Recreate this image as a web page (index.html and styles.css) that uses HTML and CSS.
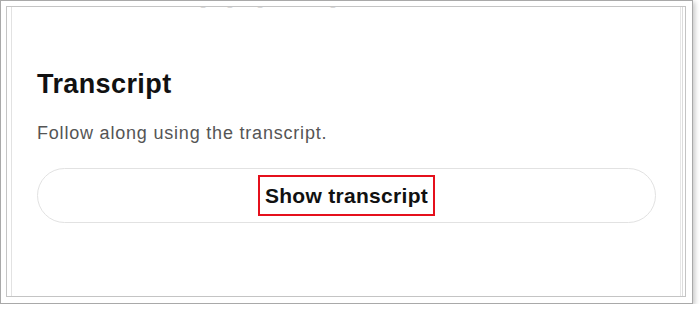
FILE: index.html
```html
<!DOCTYPE html>
<html lang="en">
<head>
    <meta charset="UTF-8">
    <meta name="viewport" content="width=device-width, initial-scale=1.0">
    <title>Transcript</title>
    <link rel="stylesheet" href="styles.css">
</head>
<body>
    <div class="frame">
        <div class="panel">
            <p class="intro">Watch the video and get going with the guide</p>
            <h2 class="title">Transcript</h2>
            <p class="hint">Follow along using the transcript.</p>
            <button class="pill" type="button"><span class="mark">Show transcript</span></button>
        </div>
    </div>
</body>
</html>
```

FILE: styles.css
```css
body {
    margin: 0;
    background: #fff;
    font-family: "Liberation Sans", Arial, sans-serif;
}
.frame {
    width: 693px;
    height: 304px;
    box-sizing: border-box;
    padding: 5px 6px 6px 5px;
    border: 1px solid #a9a9a9;
    background: #fff;
    box-shadow: 2px 2px 5px rgba(0, 0, 0, 0.22);
}
.panel {
    height: 100%;
    box-sizing: border-box;
    padding: 0 29px 0 30px;
    border: 1px solid #c4c4c4;
    overflow: hidden;
    box-shadow:
        inset 4px 0 0 #fff,
        inset 5px 0 0 #e2e2e2,
        inset -2px 0 0 #fff,
        inset -3px 0 0 #dcdcdc,
        inset -4px 0 0 #fff,
        inset -5px 0 0 #e6e6e6;
}
.intro {
    margin: -17px 0 0 12px;
    font-size: 16px;
    line-height: 20px;
    color: #d8d8d8;
}
.title {
    margin: 58px 0 0;
    font-size: 27px;
    line-height: 32px;
    font-weight: bold;
    color: #111;
    letter-spacing: 0.4px;
}
.hint {
    margin: 22px 0 0;
    font-size: 18px;
    line-height: 22px;
    color: #555;
    letter-spacing: 0.8px;
}
.pill {
    display: flex;
    align-items: center;
    justify-content: center;
    width: 100%;
    height: 55px;
    margin-top: 24px;
    padding: 0;
    box-sizing: border-box;
    background: #fff;
    border: 1.5px solid #e2e2e2;
    border-radius: 28px;
    font-family: inherit;
    cursor: pointer;
}
.mark {
    display: inline-block;
    padding: 3px 5px;
    border: 2px solid #e5101c;
    font-size: 21px;
    line-height: 31px;
    font-weight: bold;
    color: #111;
    letter-spacing: 0.3px;
}
```
